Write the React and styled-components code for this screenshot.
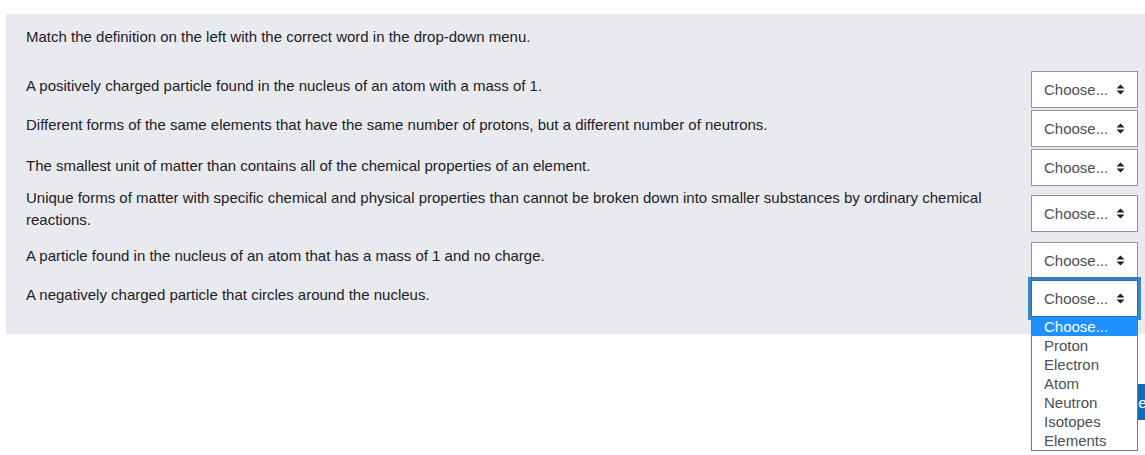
import styled, { createGlobalStyle } from 'styled-components';

const GlobalStyle = createGlobalStyle`
  html {
    overflow: hidden;
  }
  body {
    margin: 0;
    padding: 0;
    background: #fff;
    font-family: 'Liberation Sans', Arial, sans-serif;
    color: #1d2125;
  }
`;

const rows = [
  {
    id: 1,
    text: 'A positively charged particle found in the nucleus of an atom with a mass of 1.',
    height: 39,
    textTop: 4,
    selectTop: 0,
  },
  {
    id: 2,
    text: 'Different forms of the same elements that have the same number of protons, but a different number of neutrons.',
    height: 39,
    textTop: 4,
    selectTop: 0,
  },
  {
    id: 3,
    text: 'The smallest unit of matter than contains all of the chemical properties of an element.',
    height: 38,
    textTop: 6,
    selectTop: 0,
  },
  {
    id: 4,
    text: 'Unique forms of matter with specific chemical and physical properties than cannot be broken down into smaller substances by ordinary chemical reactions.',
    height: 55,
    textTop: 0,
    selectTop: 8,
  },
  {
    id: 5,
    text: 'A particle found in the nucleus of an atom that has a mass of 1 and no charge.',
    height: 38,
    textTop: 3,
    selectTop: 0,
  },
  {
    id: 6,
    text: 'A negatively charged particle that circles around the nucleus.',
    height: 54,
    textTop: 4,
    selectTop: 0,
    open: true,
  },
];

const options = ['Choose...', 'Proton', 'Electron', 'Atom', 'Neutron', 'Isotopes', 'Elements'];

const SortIcon = () => (
  <svg width='9' height='11' viewBox='0 0 9 11'>
    <path d='M4.5 0.5 L8.5 4.5 L0.5 4.5 Z' fill='#1d2125' />
    <path d='M4.5 10.5 L8.5 6.5 L0.5 6.5 Z' fill='#1d2125' />
  </svg>
);

const App = () => {
  return (
    <>
      <GlobalStyle />
      <Page>
        <Formulation>
          <Prompt>Match the definition on the left with the correct word in the drop-down menu.</Prompt>
          <Answers>
            {rows.map((row) => (
              <Row key={row.id} $height={row.height}>
                <Definition $top={row.textTop}>{row.text}</Definition>
                <SelectCell $top={row.selectTop}>
                  <Select $focused={row.open}>
                    <span>Choose...</span>
                    <SortIcon />
                  </Select>
                  {row.open && (
                    <OptionList>
                      {options.map((opt, i) => (
                        <Option key={opt} $active={i === 0}>
                          {opt}
                        </Option>
                      ))}
                    </OptionList>
                  )}
                </SelectCell>
              </Row>
            ))}
          </Answers>
        </Formulation>
        <SubmitRow>
          <CheckButton>Check</CheckButton>
        </SubmitRow>
      </Page>
    </>
  );
};

export default App;

const Page = styled.div`
  padding: 14px 0 0 6px;
  width: 1300px;
  min-height: 455px;
  box-sizing: border-box;
`;

const Formulation = styled.div`
  width: 1140px;
  box-sizing: border-box;
  background: #e9eaf0;
  padding: 12px 8px 0 20px;
  position: relative;
  z-index: 1;
`;

const Prompt = styled.div`
  font-size: 15px;
  line-height: 22px;
  margin-bottom: 23px;
`;

const Answers = styled.div`
  display: flex;
  flex-direction: column;
`;

const Row = styled.div`
  display: flex;
  align-items: flex-start;
  justify-content: space-between;
  height: ${({ $height }) => $height}px;
`;

const Definition = styled.div`
  font-size: 15px;
  line-height: 22px;
  margin-top: ${({ $top }) => $top}px;
  max-width: 965px;
`;

const SelectCell = styled.div`
  position: relative;
  margin-top: ${({ $top }) => $top}px;
`;

const Select = styled.div`
  width: 107px;
  height: 37px;
  box-sizing: border-box;
  display: flex;
  align-items: center;
  justify-content: space-between;
  padding: 0 12px 1px 12px;
  background: #fff;
  border: 1px solid ${({ $focused }) => ($focused ? '#1d6fbc' : '#8f959e')};
  box-shadow: ${({ $focused }) =>
    $focused ? '0 0 0 3px rgba(15, 108, 191, 0.8)' : 'none'};
  font-size: 15px;
  color: #495057;
`;

const OptionList = styled.div`
  position: absolute;
  top: 37px;
  left: 0;
  width: 107px;
  box-sizing: border-box;
  background: #fff;
  border: 1px solid #767676;
  border-top: none;
  z-index: 5;
`;

const Option = styled.div`
  height: 19px;
  line-height: 19px;
  padding-left: 12px;
  font-size: 15px;
  color: ${({ $active }) => ($active ? '#fff' : '#495057')};
  background: ${({ $active }) => ($active ? '#1e90ff' : '#fff')};
`;

const SubmitRow = styled.div`
  display: flex;
  padding-left: 1101px;
  margin-top: 50px;
`;

const CheckButton = styled.div`
  height: 36px;
  display: flex;
  align-items: center;
  padding: 0 12px;
  background: #0f6cbf;
  color: #fff;
  font-size: 15px;
`;
